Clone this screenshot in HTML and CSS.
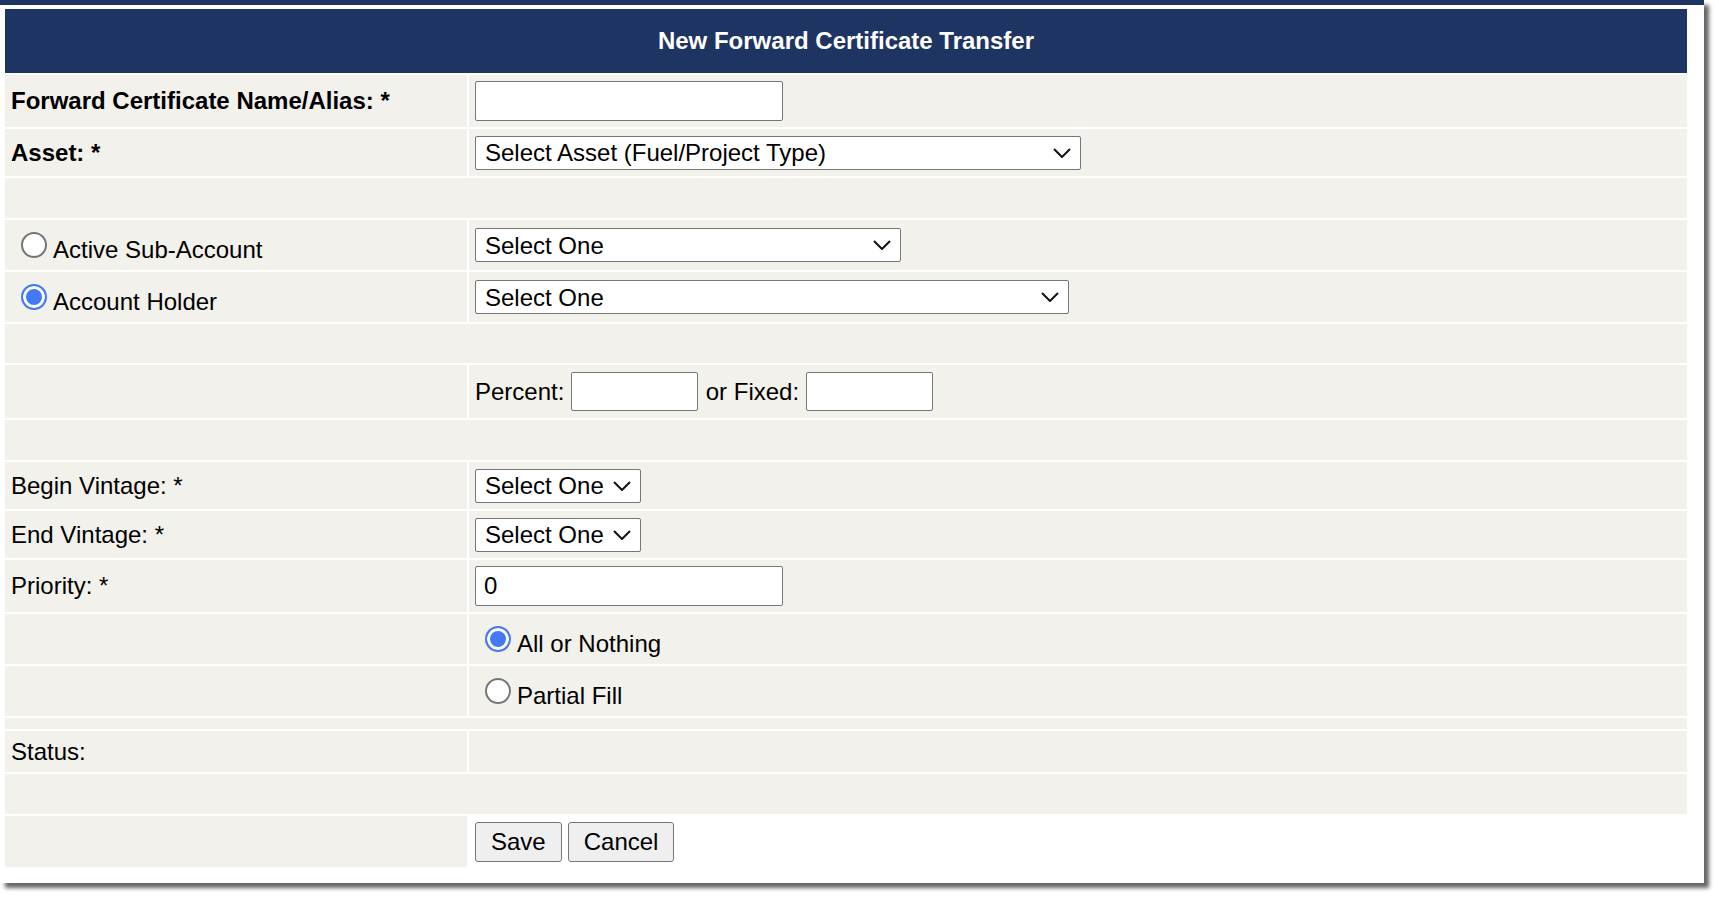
FILE: index.html
```html
<!DOCTYPE html>
<html lang="en">
<head>
<meta charset="utf-8">
<title>New Forward Certificate Transfer</title>
<link rel="stylesheet" href="styles.css">
</head>
<body>
<div class="panel">
  <div class="form">
    <div class="title-bar">New Forward Certificate Transfer</div>

    <div class="row h52">
      <div class="cell label bold">Forward Certificate Name/Alias: *</div>
      <div class="cell field-cell"><input type="text" class="text-input w-name" value=""></div>
    </div>

    <div class="row h47">
      <div class="cell label bold">Asset: *</div>
      <div class="cell field-cell">
        <span class="select-wrap w-asset">
          <select class="select"><option>Select Asset (Fuel/Project Type)</option></select>
          <svg class="chev" viewBox="0 0 18 10" width="18" height="10"><path d="M1 1 L9 9 L17 1" fill="none" stroke="#111" stroke-width="2"/></svg>
        </span>
      </div>
    </div>

    <div class="row h40"><div class="cell span"></div></div>

    <div class="row h50">
      <div class="cell label">
        <label class="radio-label"><input type="radio" name="dest" class="radio"><span class="radio-text">Active Sub-Account</span></label>
      </div>
      <div class="cell field-cell">
        <span class="select-wrap w-sub">
          <select class="select"><option>Select One</option></select>
          <svg class="chev" viewBox="0 0 18 10" width="18" height="10"><path d="M1 1 L9 9 L17 1" fill="none" stroke="#111" stroke-width="2"/></svg>
        </span>
      </div>
    </div>

    <div class="row h50">
      <div class="cell label">
        <label class="radio-label"><input type="radio" name="dest" class="radio" checked><span class="radio-text">Account Holder</span></label>
      </div>
      <div class="cell field-cell">
        <span class="select-wrap w-holder">
          <select class="select"><option>Select One</option></select>
          <svg class="chev" viewBox="0 0 18 10" width="18" height="10"><path d="M1 1 L9 9 L17 1" fill="none" stroke="#111" stroke-width="2"/></svg>
        </span>
      </div>
    </div>

    <div class="row h39"><div class="cell span"></div></div>

    <div class="row h53">
      <div class="cell label"></div>
      <div class="cell field-cell inline-text">Percent:&nbsp;<input type="text" class="text-input w-small">&nbsp;or Fixed:&nbsp;<input type="text" class="text-input w-small"></div>
    </div>

    <div class="row h40"><div class="cell span"></div></div>

    <div class="row h47">
      <div class="cell label">Begin Vintage: *</div>
      <div class="cell field-cell">
        <span class="select-wrap w-vintage">
          <select class="select"><option>Select One</option></select>
          <svg class="chev" viewBox="0 0 18 10" width="18" height="10"><path d="M1 1 L9 9 L17 1" fill="none" stroke="#111" stroke-width="2"/></svg>
        </span>
      </div>
    </div>

    <div class="row h47">
      <div class="cell label">End Vintage: *</div>
      <div class="cell field-cell">
        <span class="select-wrap w-vintage">
          <select class="select"><option>Select One</option></select>
          <svg class="chev" viewBox="0 0 18 10" width="18" height="10"><path d="M1 1 L9 9 L17 1" fill="none" stroke="#111" stroke-width="2"/></svg>
        </span>
      </div>
    </div>

    <div class="row h52">
      <div class="cell label">Priority: *</div>
      <div class="cell field-cell"><input type="text" class="text-input w-name" value="0"></div>
    </div>

    <div class="row h50">
      <div class="cell label"></div>
      <div class="cell field-cell">
        <label class="radio-label"><input type="radio" name="fill" class="radio" checked><span class="radio-text">All or Nothing</span></label>
      </div>
    </div>

    <div class="row h50">
      <div class="cell label"></div>
      <div class="cell field-cell">
        <label class="radio-label"><input type="radio" name="fill" class="radio"><span class="radio-text">Partial Fill</span></label>
      </div>
    </div>

    <div class="row h11"><div class="cell span"></div></div>

    <div class="row h41">
      <div class="cell label">Status:</div>
      <div class="cell field-cell"></div>
    </div>

    <div class="row h40"><div class="cell span"></div></div>

    <div class="row h51">
      <div class="cell label"></div>
      <div class="cell field-cell plain">
        <div class="buttons">
          <button type="button" class="btn">Save</button>
          <button type="button" class="btn">Cancel</button>
        </div>
      </div>
    </div>
  </div>
</div>
</body>
</html>
```

FILE: styles.css
```css
html, body {
  margin: 0;
  padding: 0;
  background: #ffffff;
}

body {
  font-family: "Liberation Sans", Arial, sans-serif;
  font-size: 24px;
  color: #000;
  height: 899px;
}

.panel {
  box-sizing: border-box;
  width: 1704px;
  height: 883px;
  background: #ffffff;
  border-top: 5px solid #1e3463;
  padding: 4px 17px 16px 5px;
  box-shadow: 5px 5px 4px rgba(0, 0, 0, 0.6);
}

.form {
  display: flex;
  flex-direction: column;
  gap: 2px;
  width: 1682px;
}

.title-bar {
  height: 64px;
  background: #1e3463;
  color: #ffffff;
  font-weight: bold;
  font-size: 24px;
  display: flex;
  align-items: center;
  justify-content: center;
}

.row {
  display: grid;
  grid-template-columns: 462px 1218px;
  column-gap: 2px;
}

.h11 { height: 11px; }
.h39 { height: 39px; }
.h40 { height: 40px; }
.h41 { height: 41px; }
.h47 { height: 47px; }
.h50 { height: 50px; }
.h51 { height: 51px; }
.h52 { height: 52px; }
.h53 { height: 53px; }

.cell {
  background: #f2f1ec;
  display: flex;
  align-items: center;
  min-width: 0;
}

.cell.span {
  grid-column: 1 / span 2;
}

.cell.plain {
  background: transparent;
}

.label {
  padding-left: 6px;
}

.bold {
  font-weight: bold;
}

.field-cell {
  padding-left: 6px;
}

.inline-text {
  white-space: nowrap;
}

.text-input {
  box-sizing: border-box;
  height: 39px;
  border: 1px solid #767676;
  border-radius: 2px;
  background: #ffffff;
  font-family: "Liberation Sans", Arial, sans-serif;
  font-size: 24px;
  color: #000;
  padding: 0 8px;
  margin: 0;
}

.w-name { width: 308px; height: 40px; }
.w-small { width: 127px; margin: 0 1px 0 0; }

.select-wrap {
  position: relative;
  display: inline-block;
  height: 34px;
}

.w-asset { width: 606px; }
.w-sub { width: 426px; }
.w-holder { width: 594px; }
.w-vintage { width: 166px; }

.select {
  -webkit-appearance: none;
  appearance: none;
  box-sizing: border-box;
  width: 100%;
  height: 34px;
  border: 1px solid #767676;
  border-radius: 2px;
  background: #ffffff;
  font-family: "Liberation Sans", Arial, sans-serif;
  font-size: 24px;
  color: #000;
  padding: 0 36px 0 9px;
  margin: 0;
}

.chev {
  position: absolute;
  right: 10px;
  top: 12px;
  pointer-events: none;
}

.radio-label {
  display: flex;
  align-items: center;
  margin-left: 10px;
}

.radio {
  -webkit-appearance: none;
  appearance: none;
  box-sizing: border-box;
  width: 26px;
  height: 26px;
  margin: 0 6px 0 0;
  border: 2px solid #767676;
  border-radius: 50%;
  background: #ffffff;
  flex: none;
}

.radio:checked {
  border-color: #4479f6;
  background: #4479f6;
  box-shadow: inset 0 0 0 3px #ffffff;
}

.radio-text {
  line-height: 27px;
  padding-top: 8px;
}

.buttons {
  display: flex;
  gap: 6px;
}

.btn {
  box-sizing: border-box;
  height: 40px;
  padding: 0 15px;
  border: 1px solid #767676;
  border-radius: 3px;
  background: #efefef;
  font-family: "Liberation Sans", Arial, sans-serif;
  font-size: 24px;
  color: #000;
  margin: 0;
}
```
